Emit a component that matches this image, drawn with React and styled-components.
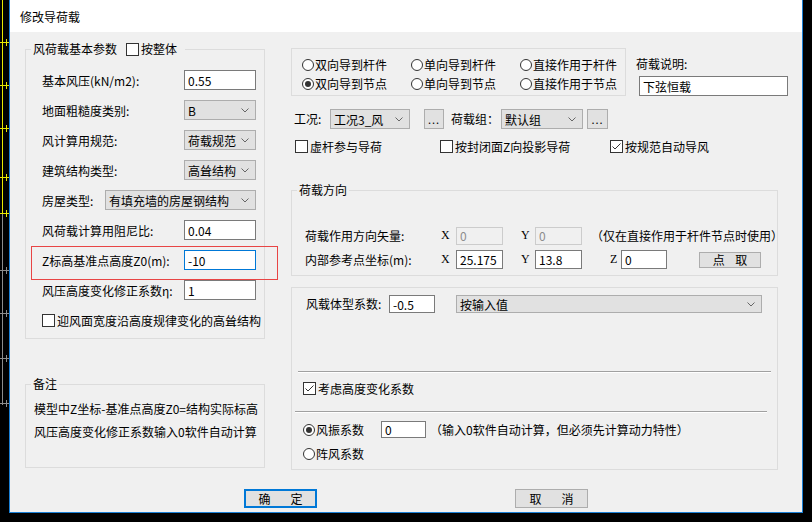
import React from 'react';
import styled, { createGlobalStyle } from 'styled-components';

const GlobalStyle = createGlobalStyle`
  html, body {
    margin: 0;
    padding: 0;
    background: #000;
  }
  body {
    width: 812px;
    height: 522px;
    overflow: hidden;
    font-family: "Noto Sans CJK SC", "Microsoft YaHei", sans-serif;
    font-size: 12px;
    color: #000;
  }
`;

const Screen = styled.div`
  display: flex;
  width: 812px;
  height: 522px;
  background: #000;
`;

const CadStrip = styled.svg`
  display: block;
  flex: none;
  width: 9px;
  height: 522px;
`;

const Dialog = styled.div`
  box-sizing: border-box;
  flex: none;
  width: 794px;
  height: 513px;
  border: 1px solid #1a7fd4;
  border-top: none;
  display: flex;
  flex-direction: column;
  background: #f0f0f0;
`;

const TitleBar = styled.div`
  height: 32px;
  flex: none;
  background: #fff;
  display: flex;
  align-items: center;
  padding-left: 10px;
  font-size: 12px;
`;

const Body = styled.div`
  flex: 1;
  display: flex;
  flex-direction: column;
`;

const Main = styled.div`
  display: flex;
  align-items: flex-start;
  padding-left: 15px;
  gap: 26px;
`;

const Column = styled.div`
  display: flex;
  flex-direction: column;
  width: ${p => p.$w}px;
  flex: none;
`;

const Group = styled.div`
  position: relative;
  box-sizing: border-box;
  width: ${p => p.$w}px;
  height: ${p => p.$h}px;
  margin-top: ${p => p.$mt || 0}px;
  border: 1px solid #dcdcdc;
  padding: ${p => p.$pad || '0'};
  display: flex;
  flex-direction: column;
`;

const Legend = styled.div`
  position: absolute;
  top: -9px;
  left: 5px;
  padding: 0 ${p => p.$pr || 2}px 0 2px;
  background: #f0f0f0;
  line-height: 16px;
  display: flex;
  align-items: center;
  white-space: nowrap;
`;

const ParamList = styled.div`
  display: flex;
  flex-direction: column;
  gap: 10px;
`;

const ParamRow = styled.div`
  position: relative;
  height: 20px;
  display: flex;
  align-items: center;
  justify-content: space-between;
  white-space: nowrap;
`;

const Highlight = styled.div`
  position: absolute;
  left: -11px;
  top: -4px;
  width: 247px;
  height: 34px;
  box-sizing: border-box;
  border: 1px solid #e84545;
  pointer-events: none;
`;

const TextInput = styled.input`
  box-sizing: border-box;
  flex: none;
  width: ${p => p.$w}px;
  height: ${p => p.$h || 20}px;
  margin: 0 0 0 ${p => p.$ml || 0}px;
  padding: 0 3px;
  font-family: inherit;
  font-size: 12px;
  outline: none;
  background: ${p => (p.$disabled ? '#f0f0f0' : '#fff')};
  color: ${p => (p.$disabled ? '#8c8c8c' : '#000')};
  border: 1px solid ${p => (p.$focus ? '#0078d7' : p.$disabled ? '#cccccc' : '#7a7a7a')};
`;

const Combo = styled.div`
  box-sizing: border-box;
  flex: none;
  width: ${p => p.$w}px;
  height: ${p => p.$h || 20}px;
  margin-left: ${p => p.$ml || 0}px;
  display: flex;
  align-items: center;
  justify-content: space-between;
  padding: 0 6px 0 3px;
  background: #e1e1e1;
  border: 1px solid #adadad;
  white-space: nowrap;
`;

const DotsButton = styled.div`
  box-sizing: border-box;
  flex: none;
  width: ${p => p.$w}px;
  height: 20px;
  margin-left: ${p => p.$ml || 0}px;
  background: #e1e1e1;
  border: 1px solid #adadad;
  display: flex;
  align-items: center;
  justify-content: center;
  font-size: 11px;
  letter-spacing: 1px;
  line-height: 1;
`;

const CheckItem = styled.div`
  display: flex;
  align-items: center;
  gap: 2px;
  height: 16px;
  white-space: nowrap;
  margin-left: ${p => p.$ml || 0}px;
`;

const CheckSvg = styled.svg`
  display: block;
  flex: none;
`;

const RadioItem = styled.div`
  display: flex;
  align-items: center;
  gap: 1px;
  height: 19px;
  white-space: nowrap;
  width: ${p => (p.$w ? `${p.$w}px` : 'auto')};
  flex: none;
`;

const RadioCircle = styled.span`
  box-sizing: border-box;
  flex: none;
  width: 12px;
  height: 12px;
  border-radius: 50%;
  border: 1px solid #333;
  background: #fff;
  display: flex;
  align-items: center;
  justify-content: center;
  &::after {
    content: '';
    width: 6px;
    height: 6px;
    border-radius: 50%;
    background: ${p => (p.$on ? '#333' : 'transparent')};
  }
`;

const NoteLine = styled.div`
  line-height: 23px;
  white-space: nowrap;
`;

const TopRow = styled.div`
  display: flex;
  margin-top: 16px;
`;

const RadioBox = styled.div`
  box-sizing: border-box;
  width: 335px;
  height: 48px;
  border: 1px solid #dcdcdc;
  padding: 6px 0 0 10px;
  display: grid;
  grid-template-columns: 109px 109px auto;
  grid-auto-rows: 19px;
`;

const Describe = styled.div`
  display: flex;
  flex-direction: column;
  margin: 8px 0 0 10px;
`;

const SmallLabel = styled.div`
  line-height: 16px;
  white-space: nowrap;
  width: ${p => (p.$w ? `${p.$w}px` : 'auto')};
  margin-left: ${p => p.$ml || 0}px;
  flex: none;
`;

const FlexRow = styled.div`
  display: flex;
  align-items: center;
  height: ${p => p.$h || 20}px;
  margin-top: ${p => p.$mt || 0}px;
  padding-left: ${p => p.$pl || 0}px;
  white-space: nowrap;
`;

const Axis = styled.span`
  flex: none;
  width: ${p => p.$w}px;
  margin-left: ${p => p.$ml || 0}px;
  font-family: "Liberation Serif", "Noto Sans CJK SC", serif;
  font-size: 12px;
`;

const PushButton = styled.div`
  box-sizing: border-box;
  flex: none;
  width: ${p => p.$w}px;
  height: ${p => p.$h}px;
  margin-left: ${p => p.$ml || 0}px;
  background: #e1e1e1;
  border: ${p => (p.$default ? '2px solid #0078d7' : '1px solid #adadad')};
  display: flex;
  align-items: center;
  justify-content: center;
  letter-spacing: ${p => p.$ls || 0}px;
  text-indent: ${p => p.$ls || 0}px;
  white-space: pre;
  line-height: 1;
`;

const Separator = styled.div`
  width: ${p => p.$w}px;
  margin: ${p => p.$mt}px 0 0 ${p => p.$ml}px;
  border-top: 1px solid #a0a0a0;
  border-bottom: 1px solid #fff;
`;

const Footer = styled.div`
  display: flex;
  margin-top: 19px;
  padding-left: 234px;
  gap: 198px;
`;

const Chevron = () => (
  <svg width="8" height="5" viewBox="0 0 8 5" style={{ flex: 'none' }}>
    <polyline points="0.5,0.5 4,4 7.5,0.5" fill="none" stroke="#666" strokeWidth="1" />
  </svg>
);

const CheckBox = ({ on }) => (
  <CheckSvg width="13" height="13" viewBox="0 0 13 13">
    <rect x="0.5" y="0.5" width="12" height="12" fill="#fff" stroke="#333" />
    {on && <polyline points="2.5,6.5 5,9 10.5,3.5" fill="none" stroke="#333" strokeWidth="1" />}
  </CheckSvg>
);

const Radio = ({ on, w, children }) => (
  <RadioItem $w={w}>
    <RadioCircle $on={on} />
    {children}
  </RadioItem>
);

const yellowTicks = [42, 85, 128, 177, 213];
const grayTicks = [270, 313, 358, 403];

const CadBackground = () => (
  <CadStrip viewBox="0 0 9 522">
    <line x1="2.5" y1="0" x2="2.5" y2="214" stroke="#e8e800" strokeWidth="1" />
    <line x1="2.5" y1="214" x2="2.5" y2="405" stroke="#8c8c8c" strokeWidth="1" />
    {yellowTicks.map(y => (
      <g key={y}>
        <line x1="0" y1={y + 0.5} x2="9" y2={y + 0.5} stroke="#e8e800" />
        <line x1="6.5" y1={y - 3} x2="6.5" y2={y + 4} stroke="#e8e800" />
      </g>
    ))}
    {grayTicks.map(y => (
      <g key={y}>
        <line x1="0" y1={y + 0.5} x2="9" y2={y + 0.5} stroke="#8c8c8c" />
        <line x1="6.5" y1={y - 3} x2="6.5" y2={y + 4} stroke="#8c8c8c" />
      </g>
    ))}
  </CadStrip>
);

const params = [
  { label: '基本风压(kN/m2):', input: '0.55' },
  { label: '地面粗糙度类别:', combo: 'B' },
  { label: '风计算用规范:', combo: '荷载规范' },
  { label: '建筑结构类型:', combo: '高耸结构' },
  { label: '房屋类型:', combo: '有填充墙的房屋钢结构', wide: true },
  { label: '风荷载计算用阻尼比:', input: '0.04' },
  { label: 'Z标高基准点高度Z0(m):', input: '-10', focus: true },
  { label: '风压高度变化修正系数η:', input: '1' },
];

export default function App() {
  return (
    <>
      <GlobalStyle />
      <Screen>
        <CadBackground />
        <Dialog>
          <TitleBar>修改导荷载</TitleBar>
          <Body>
            <Main>
              <Column $w={240}>
                <Group $w={240} $h={290} $mt={17} $pad="20px 8px 0 16px">
                  <Legend $pr={8}>
                    风荷载基本参数
                    <CheckItem $ml={9}>
                      <CheckBox />
                      按整体
                    </CheckItem>
                  </Legend>
                  <ParamList>
                    {params.map(p => (
                      <ParamRow key={p.label}>
                        {p.focus && <Highlight />}
                        <span>{p.label}</span>
                        {p.input !== undefined ? (
                          <TextInput $w={72} $focus={p.focus} value={p.input} readOnly />
                        ) : (
                          <Combo $w={p.wide ? 151 : 72}>
                            <span>{p.combo}</span>
                            <Chevron />
                          </Combo>
                        )}
                      </ParamRow>
                    ))}
                    <ParamRow>
                      <CheckItem>
                        <CheckBox />
                        迎风面宽度沿高度规律变化的高耸结构
                      </CheckItem>
                    </ParamRow>
                  </ParamList>
                </Group>
                <Group $w={240} $h={84} $mt={45} $pad="12px 0 0 8px">
                  <Legend>备注</Legend>
                  <NoteLine>模型中Z坐标-基准点高度Z0=结构实际标高</NoteLine>
                  <NoteLine>风压高度变化修正系数输入0软件自动计算</NoteLine>
                </Group>
              </Column>

              <Column $w={497}>
                <TopRow>
                  <RadioBox>
                    <Radio>双向导到杆件</Radio>
                    <Radio>单向导到杆件</Radio>
                    <Radio>直接作用于杆件</Radio>
                    <Radio on>双向导到节点</Radio>
                    <Radio>单向导到节点</Radio>
                    <Radio>直接作用于节点</Radio>
                  </RadioBox>
                  <Describe>
                    <SmallLabel>荷载说明:</SmallLabel>
                    <TextInput $w={149} $ml={3} style={{ marginTop: 4 }} value="下弦恒载" readOnly />
                  </Describe>
                </TopRow>

                <FlexRow $mt={13} $pl={3}>
                  <SmallLabel $w={36}>工况:</SmallLabel>
                  <Combo $w={80}>
                    <span>工况3_风</span>
                    <Chevron />
                  </Combo>
                  <DotsButton $w={20} $ml={14}>...</DotsButton>
                  <SmallLabel $w={50} $ml={7}>荷载组：</SmallLabel>
                  <Combo $w={82}>
                    <span>默认组</span>
                    <Chevron />
                  </Combo>
                  <DotsButton $w={21} $ml={4}>...</DotsButton>
                </FlexRow>

                <FlexRow $h={16} $mt={9} $pl={4}>
                  <CheckItem style={{ width: 145 }}>
                    <CheckBox />
                    虚杆参与导荷
                  </CheckItem>
                  <CheckItem style={{ width: 170 }}>
                    <CheckBox />
                    按封闭面Z向投影导荷
                  </CheckItem>
                  <CheckItem>
                    <CheckBox on />
                    按规范自动导风
                  </CheckItem>
                </FlexRow>

                <Group $w={487} $h={86} $mt={36} $pad="35px 0 0 13px">
                  <Legend>荷载方向</Legend>
                  <FlexRow $h={19}>
                    <SmallLabel $w={136}>荷载作用方向矢量:</SmallLabel>
                    <Axis $w={15}>X</Axis>
                    <TextInput $w={47} $h={18} $disabled value="0" readOnly />
                    <Axis $w={14} $ml={18}>Y</Axis>
                    <TextInput $w={47} $h={18} $disabled value="0" readOnly />
                    <SmallLabel $ml={9}>（仅在直接作用于杆件节点时使用）</SmallLabel>
                  </FlexRow>
                  <FlexRow $h={19} $mt={5}>
                    <SmallLabel $w={136}>内部参考点坐标(m):</SmallLabel>
                    <Axis $w={15}>X</Axis>
                    <TextInput $w={47} $h={19} value="25.175" readOnly />
                    <Axis $w={14} $ml={18}>Y</Axis>
                    <TextInput $w={47} $h={19} value="13.8" readOnly />
                    <Axis $w={11} $ml={28}>Z</Axis>
                    <TextInput $w={46} $h={19} value="0" readOnly />
                    <PushButton $w={62} $h={16} $ml={32} $ls={4}>点 取</PushButton>
                  </FlexRow>
                </Group>

                <Group $w={487} $h={183} $mt={11} $pad="7px 0 0 0">
                  <FlexRow $h={18} $pl={14}>
                    <SmallLabel $w={83}>风载体型系数:</SmallLabel>
                    <TextInput $w={46} $h={18} value="-0.5" readOnly />
                    <Combo $w={306} $h={18} $ml={21}>
                      <span>按输入值</span>
                      <Chevron />
                    </Combo>
                  </FlexRow>
                  <Separator $w={473} $mt={58} $ml={6} />
                  <FlexRow $h={16} $mt={7} $pl={11}>
                    <CheckItem>
                      <CheckBox on />
                      考虑高度变化系数
                    </CheckItem>
                  </FlexRow>
                  <Separator $w={472} $mt={15} $ml={3} />
                  <FlexRow $h={17} $mt={8} $pl={11}>
                    <Radio on w={78}>风振系数</Radio>
                    <TextInput $w={45} $h={17} value="0" readOnly />
                    <SmallLabel $ml={4}>（输入0软件自动计算，但必须先计算动力特性）</SmallLabel>
                  </FlexRow>
                  <FlexRow $h={17} $mt={7} $pl={11}>
                    <Radio>阵风系数</Radio>
                  </FlexRow>
                </Group>
              </Column>
            </Main>

            <Footer>
              <PushButton $default $w={73} $h={19} $ls={4}>确　定</PushButton>
              <PushButton $w={73} $h={19} $ls={4}>取　消</PushButton>
            </Footer>
          </Body>
        </Dialog>
      </Screen>
    </>
  );
}
